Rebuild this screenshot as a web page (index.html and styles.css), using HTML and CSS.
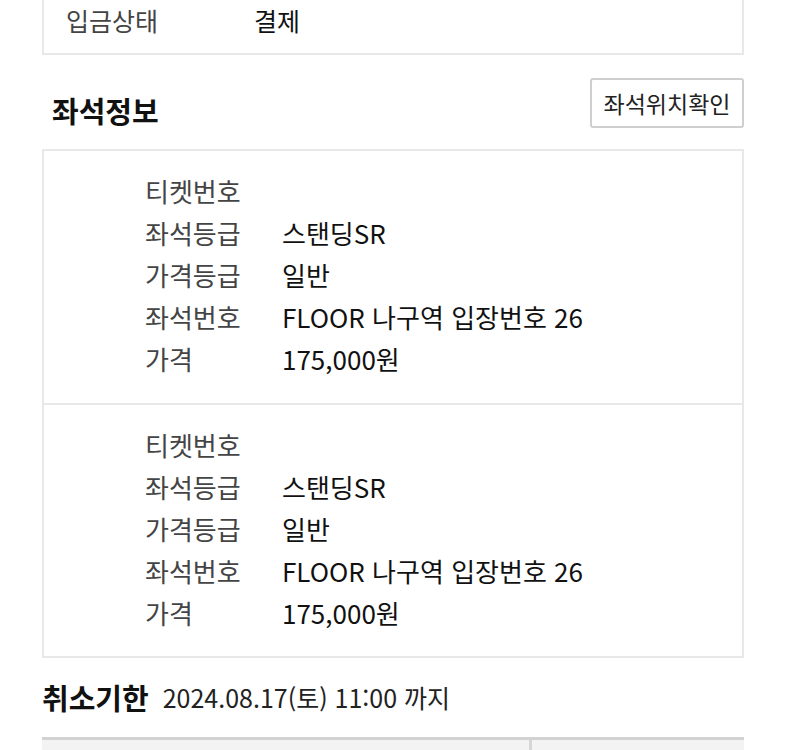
FILE: index.html
```html
<!DOCTYPE html>
<html lang="ko">
<head>
<meta charset="utf-8">
<link rel="stylesheet" href="styles.css">
</head>
<body>
<div class="page">
  <div class="pay-box">
    <div class="pay-row"><span class="pay-label">입금상태</span><span class="pay-value">결제</span></div>
  </div>

  <div class="seat-head">
    <h2 class="title">좌석정보</h2>
    <button class="seat-btn">좌석위치확인</button>
  </div>

  <div class="seat-box">
    <div class="ticket">
      <div class="row"><span class="lbl">티켓번호</span><span class="val"></span></div>
      <div class="row"><span class="lbl">좌석등급</span><span class="val">스탠딩SR</span></div>
      <div class="row"><span class="lbl">가격등급</span><span class="val">일반</span></div>
      <div class="row"><span class="lbl">좌석번호</span><span class="val">FLOOR 나구역 입장번호 26</span></div>
      <div class="row"><span class="lbl">가격</span><span class="val">175,000원</span></div>
    </div>
    <div class="ticket">
      <div class="row"><span class="lbl">티켓번호</span><span class="val"></span></div>
      <div class="row"><span class="lbl">좌석등급</span><span class="val">스탠딩SR</span></div>
      <div class="row"><span class="lbl">가격등급</span><span class="val">일반</span></div>
      <div class="row"><span class="lbl">좌석번호</span><span class="val">FLOOR 나구역 입장번호 26</span></div>
      <div class="row"><span class="lbl">가격</span><span class="val">175,000원</span></div>
    </div>
  </div>

  <div class="cancel">
    <span class="cancel-title">취소기한</span>
    <span class="cancel-date">2024.08.17(토) 11:00 까지</span>
  </div>

  <div class="bottom-bar">
    <div class="cell cell-left"></div>
    <div class="cell cell-right"></div>
  </div>
</div>
</body>
</html>
```

FILE: styles.css
```css
* { box-sizing: border-box; }
html, body { margin: 0; padding: 0; background: #fff; }
body {
  font-family: "Noto Sans CJK KR", "Noto Sans", sans-serif;
  color: #111;
  height: 750px;
  overflow: hidden;
}
.page { padding: 0 43px 0 42px; }

.pay-box {
  border: 2px solid #e8e8e8;
  border-top: none;
  padding: 0 0 13px 22px;
}
.pay-row {
  display: flex;
  height: 40px;
  align-items: center;
  font-size: 25px;
}
.pay-label { width: 188px; color: #444; }
.pay-value { color: #111; }

.seat-head {
  display: flex;
  justify-content: space-between;
  align-items: flex-start;
  margin-top: 23px;
  height: 50px;
}
.title {
  margin: 12px 0 0 10px;
  font-size: 29px;
  font-weight: 700;
  line-height: 40px;
  color: #111;
}
.seat-btn {
  width: 154px;
  height: 50px;
  font-family: inherit;
  font-size: 23px;
  color: #222;
  background: #fff;
  border: 2px solid #cfcfcf;
  border-radius: 3px;
  padding: 0;
  white-space: nowrap;
}

.seat-box {
  margin-top: 21px;
  border: 2px solid #e8e8e8;
}
.ticket {
  padding: 18px 0 24px 101px;
}
.ticket + .ticket {
  border-top: 2px solid #e8e8e8;
  padding-bottom: 23px;
}
.row {
  display: flex;
  height: 42px;
  align-items: center;
  font-size: 26px;
}
.lbl { width: 137px; color: #444; }
.val { color: #111; }

.cancel {
  display: flex;
  align-items: center;
  height: 40px;
  margin-top: 19px;
}
.cancel-title {
  font-size: 29px;
  font-weight: 700;
  color: #111;
  margin-right: 14px;
}
.cancel-date {
  font-size: 25px;
  color: #222;
}

.bottom-bar {
  margin-top: 20px;
  display: flex;
  border-top: 3px solid #d2d2d2;
  height: 20px;
}
.cell { background: #f3f3f3; height: 100%; }
.cell-left { width: 490px; border-right: 3px solid #d6d6d6; }
.cell-right { flex: 1; }
```
